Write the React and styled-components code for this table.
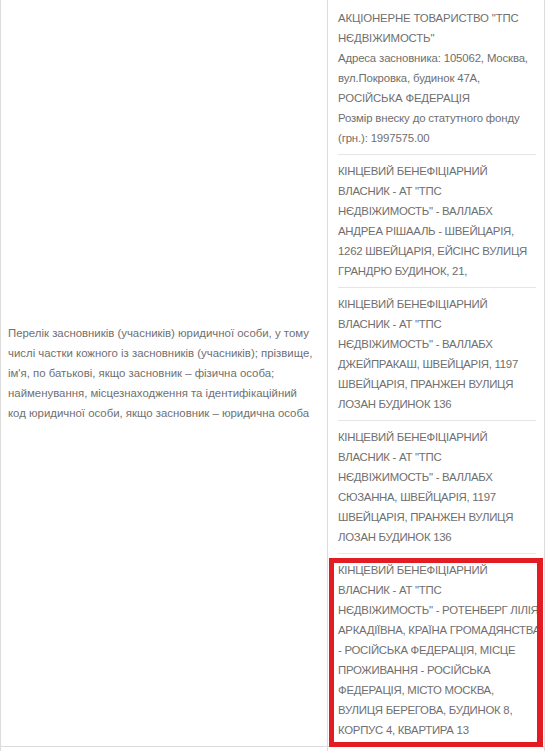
import React from "react";
import styled, { createGlobalStyle } from "styled-components";

const GlobalStyle = createGlobalStyle`
  html, body {
    margin: 0;
    padding: 0;
    background: #fff;
    overflow: hidden;
  }
  body {
    font-family: "Liberation Sans", Arial, sans-serif;
  }
`;

// caps: тексти великими літерами трохи щільніші
const founders = [
  {
    caps: false,
    lines: [
      'АКЦІОНЕРНЕ ТОВАРИСТВО "ТПС',
      'НЄДВІЖИМОСТЬ"',
      "Адреса засновника: 105062, Москва,",
      "вул.Покровка, будинок 47А,",
      "РОСІЙСЬКА ФЕДЕРАЦІЯ",
      "Розмір внеску до статутного фонду",
      "(грн.): 1997575.00",
    ],
  },
  {
    caps: true,
    lines: [
      "КІНЦЕВИЙ БЕНЕФІЦІАРНИЙ",
      'ВЛАСНИК - АТ "ТПС',
      'НЄДВІЖИМОСТЬ" - ВАЛЛАБХ',
      "АНДРЕА РІШААЛЬ - ШВЕЙЦАРІЯ,",
      "1262 ШВЕЙЦАРІЯ, ЕЙСІНС ВУЛИЦЯ",
      "ГРАНДРЮ БУДИНОК, 21,",
    ],
  },
  {
    caps: true,
    lines: [
      "КІНЦЕВИЙ БЕНЕФІЦІАРНИЙ",
      'ВЛАСНИК - АТ "ТПС',
      'НЄДВІЖИМОСТЬ" - ВАЛЛАБХ',
      "ДЖЕЙПРАКАШ, ШВЕЙЦАРІЯ, 1197",
      "ШВЕЙЦАРІЯ, ПРАНЖЕН ВУЛИЦЯ",
      "ЛОЗАН БУДИНОК 136",
    ],
  },
  {
    caps: true,
    lines: [
      "КІНЦЕВИЙ БЕНЕФІЦІАРНИЙ",
      'ВЛАСНИК - АТ "ТПС',
      'НЄДВІЖИМОСТЬ" - ВАЛЛАБХ',
      "СЮЗАННА, ШВЕЙЦАРІЯ, 1197",
      "ШВЕЙЦАРІЯ, ПРАНЖЕН ВУЛИЦЯ",
      "ЛОЗАН БУДИНОК 136",
    ],
  },
  {
    caps: true,
    lines: [
      "КІНЦЕВИЙ БЕНЕФІЦІАРНИЙ",
      'ВЛАСНИК - АТ "ТПС',
      'НЄДВІЖИМОСТЬ" - РОТЕНБЕРГ ЛІЛІЯ',
      "АРКАДІЇВНА, КРАЇНА ГРОМАДЯНСТВА",
      "- РОСІЙСЬКА ФЕДЕРАЦІЯ, МІСЦЕ",
      "ПРОЖИВАННЯ - РОСІЙСЬКА",
      "ФЕДЕРАЦІЯ, МІСТО МОСКВА,",
      "ВУЛИЦЯ БЕРЕГОВА, БУДИНОК 8,",
      "КОРПУС 4, КВАРТИРА 13",
    ],
  },
];

const labelLines = [
  "Перелік засновників (учасників) юридичної особи, у тому",
  "числі частки кожного із засновників (учасників); прізвище,",
  "ім'я, по батькові, якщо засновник – фізична особа;",
  "найменування, місцезнаходження та ідентифікаційний",
  "код юридичної особи, якщо засновник – юридична особа",
];

const Table = styled.div`
  width: 545px;
  box-sizing: border-box;
  border-left: 1px solid #dcdcdc;
  border-right: 1px solid #dcdcdc;
`;

const Row = styled.div`
  display: grid;
  grid-template-columns: 327px minmax(0, 1fr);
  border-bottom: ${(p) => (p.$last ? "none" : "1px solid #dcdcdc")};
  min-height: ${(p) => p.$minHeight || 0}px;
`;

const LabelCell = styled.div`
  box-sizing: border-box;
  border-right: 1px solid #dcdcdc;
  padding: 0 4px 0 7px;
  display: flex;
  align-items: center;
  min-width: 0;
`;

const ValueCell = styled.div`
  box-sizing: border-box;
  padding: 2px 8px 0 10px;
  min-width: 0;
`;

const Text = styled.div`
  font-size: 11.4px;
  letter-spacing: ${(p) => p.$spacing}px;
  line-height: 20px;
  color: #6f6f6f;
  white-space: nowrap;
`;

const Item = styled.div`
  position: relative;
  padding: 6px 0;
  border-bottom: ${(p) => (p.$last ? "none" : "1px solid #e6e6e6")};
`;

const Highlight = styled.div`
  position: absolute;
  top: 4px;
  bottom: -1px;
  left: -9px;
  right: -7px;
  border: solid #e31b23;
  border-width: 5px 6px 5px 5px;
  pointer-events: none;
`;

const Lines = ({ lines, spacing }) => (
  <Text $spacing={spacing}>
    {lines.map((l, i) => (
      <React.Fragment key={i}>
        {l}
        {i < lines.length - 1 && <br />}
      </React.Fragment>
    ))}
  </Text>
);

export default function App() {
  return (
    <>
      <GlobalStyle />
      <Table>
        <Row>
          <LabelCell>
            <Lines lines={labelLines} spacing={0} />
          </LabelCell>
          <ValueCell>
            {founders.map((f, i) => {
              const last = i === founders.length - 1;
              return (
                <Item key={i} $last={last}>
                  <Lines lines={f.lines} spacing={f.caps ? -0.27 : -0.15} />
                  {last && <Highlight />}
                </Item>
              );
            })}
          </ValueCell>
        </Row>
        <Row $last $minHeight={40}>
          <LabelCell />
          <ValueCell />
        </Row>
      </Table>
    </>
  );
}
